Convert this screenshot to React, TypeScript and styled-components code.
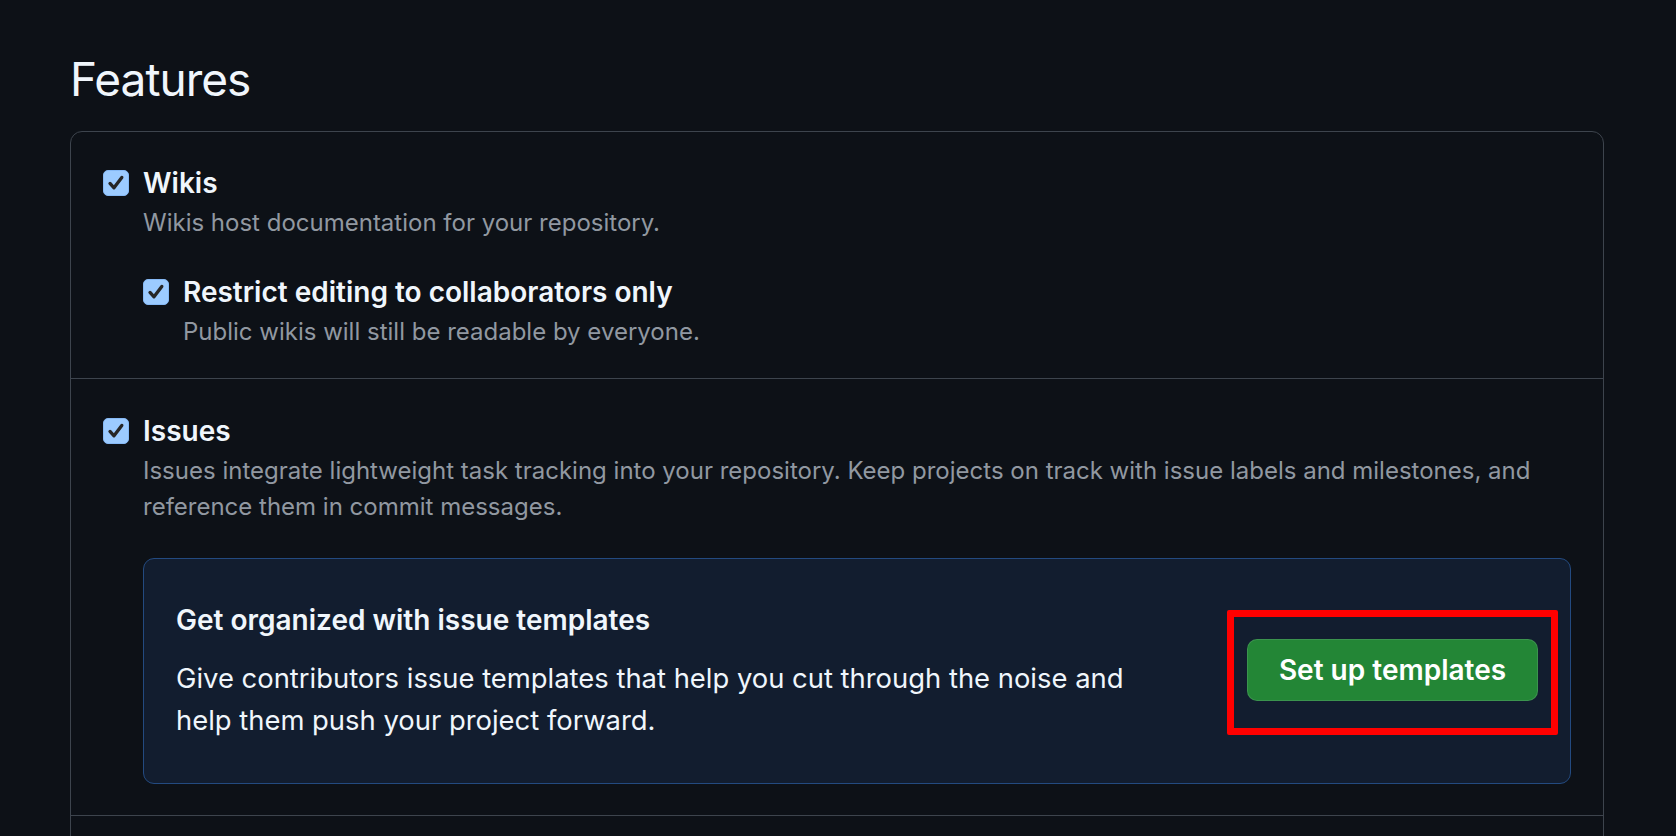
import React from "react";
import styled, { createGlobalStyle } from "styled-components";

const Global = createGlobalStyle`
  html, body {
    margin: 0;
    padding: 0;
    background: #0d1117;
    overflow: hidden;
  }
  body {
    font-family: Inter, "Noto Sans", "Liberation Sans", sans-serif;
    color: #f0f6fc;
  }
  * { box-sizing: border-box; }
`;

const Page = styled.main`
  height: 836px;
  overflow: hidden;
  padding: 51px 72px 0 70px;
`;

const Heading = styled.h2`
  margin: 0 0 23px;
  font-size: 46px;
  line-height: 57px;
  font-weight: 400;
  color: #f0f6fc;
  letter-spacing: -1px;
`;

const Card = styled.section`
  border: 1.5px solid #3d444d;
  border-radius: 12px;
`;

const Section = styled.div<{ $top?: number; $bottom?: number }>`
  padding: ${(p) => p.$top ?? 30}px 32px ${(p) => p.$bottom ?? 28}px;
  & + & {
    border-top: 1.5px solid #3d444d;
  }
`;

const Row = styled.label<{ $indent?: boolean; $gap?: number }>`
  display: grid;
  grid-template-columns: 26px 1fr;
  column-gap: 14px;
  margin-left: ${(p) => (p.$indent ? "40px" : "0")};
  margin-top: ${(p) => p.$gap ?? 0}px;
`;

const Box = styled.span`
  width: 26px;
  height: 26px;
  margin-top: 8px;
  border-radius: 5px;
  background: #9ccbff;
  border: 1px solid #86b9f5;
  display: flex;
  align-items: center;
  justify-content: center;
`;

const LabelText = styled.span`
  font-size: 28px;
  line-height: 42px;
  font-weight: 600;
  color: #f0f6fc;
`;

const Desc = styled.p`
  grid-column: 2;
  margin: 1px 0 0;
  font-size: 24px;
  line-height: 36px;
  color: #9198a1;
`;

const TemplateBox = styled.div`
  grid-column: 2;
  margin-top: 33px;
  display: flex;
  align-items: center;
  justify-content: space-between;
  padding: 40px 32px 42px;
  background: #121d2f;
  border: 1.5px solid #234a80;
  border-radius: 11px;
`;

const TemplateText = styled.div`
  max-width: 975px;
`;

const TemplateTitle = styled.h3`
  margin: 0;
  font-size: 28px;
  line-height: 42px;
  font-weight: 600;
  color: #f0f6fc;
`;

const TemplateBody = styled.p`
  margin: 16px 0 0;
  font-size: 27.4px;
  line-height: 42px;
  color: #f0f6fc;
`;

const ButtonWrap = styled.div`
  position: relative;
  flex: none;
`;

const GreenButton = styled.button`
  height: 62px;
  width: 291px;
  border-radius: 10px;
  border: 1.5px solid rgba(240, 246, 252, 0.12);
  background: #238636;
  color: #ffffff;
  font-family: inherit;
  font-size: 28px;
  font-weight: 600;
  cursor: pointer;
`;

const Highlight = styled.span`
  position: absolute;
  top: -29px;
  left: -20px;
  right: -20px;
  bottom: -34px;
  border: 7px solid #ff0000;
  border-radius: 2px;
  pointer-events: none;
`;

const Check = () => (
  <Box>
    <svg width="18" height="18" viewBox="0 0 18 18" aria-hidden>
      <path
        d="M3 9.4 L7 13.8 L14.8 3.4"
        fill="none"
        stroke="#262626"
        strokeWidth="3.3"
        strokeLinecap="round"
        strokeLinejoin="round"
      />
    </svg>
  </Box>
);

export default function App() {
  return (
    <>
      <Global />
      <Page>
        <Heading>Features</Heading>
        <Card>
          <Section>
            <Row>
              <Check />
              <LabelText>Wikis</LabelText>
              <Desc>Wikis host documentation for your repository.</Desc>
            </Row>
            <Row $indent $gap={30}>
              <Check />
              <LabelText>Restrict editing to collaborators only</LabelText>
              <Desc>Public wikis will still be readable by everyone.</Desc>
            </Row>
          </Section>
          <Section $top={31} $bottom={31}>
            <Row>
              <Check />
              <LabelText>Issues</LabelText>
              <Desc>
                Issues integrate lightweight task tracking into your repository. Keep projects on
                track with issue labels and milestones, and reference them in commit messages.
              </Desc>
              <TemplateBox>
                <TemplateText>
                  <TemplateTitle>Get organized with issue templates</TemplateTitle>
                  <TemplateBody>
                    Give contributors issue templates that help you cut through the noise and help
                    them push your project forward.
                  </TemplateBody>
                </TemplateText>
                <ButtonWrap>
                  <GreenButton type="button">Set up templates</GreenButton>
                  <Highlight />
                </ButtonWrap>
              </TemplateBox>
            </Row>
          </Section>
          <Section $top={34}>
            <Row>
              <Check />
              <LabelText>Sponsorships</LabelText>
              <Desc>
                Sponsorships help your community know how to financially support this repository.
              </Desc>
            </Row>
          </Section>
        </Card>
      </Page>
    </>
  );
}
